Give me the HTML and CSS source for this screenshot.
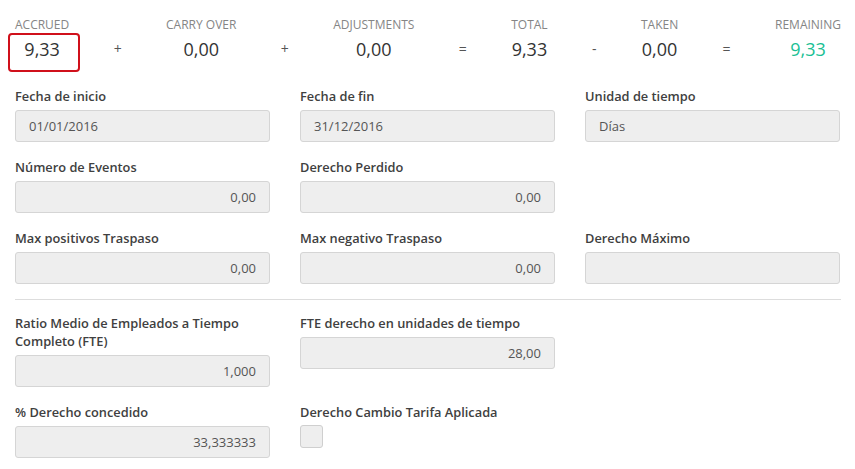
FILE: index.html
```html
<!DOCTYPE html>
<html lang="es">
<head>
<meta charset="utf-8">
<title>Derecho</title>
<link rel="stylesheet" href="styles.css">
</head>
<body>
<div class="page">
  <div class="summary">
    <div class="sum-item">
      <div class="sum-label">ACCRUED</div>
      <div class="sum-value highlighted">9,33</div>
    </div>
    <div class="sum-op">+</div>
    <div class="sum-item">
      <div class="sum-label">CARRY OVER</div>
      <div class="sum-value">0,00</div>
    </div>
    <div class="sum-op">+</div>
    <div class="sum-item">
      <div class="sum-label">ADJUSTMENTS</div>
      <div class="sum-value">0,00</div>
    </div>
    <div class="sum-op">=</div>
    <div class="sum-item">
      <div class="sum-label">TOTAL</div>
      <div class="sum-value">9,33</div>
    </div>
    <div class="sum-op">-</div>
    <div class="sum-item">
      <div class="sum-label">TAKEN</div>
      <div class="sum-value">0,00</div>
    </div>
    <div class="sum-op">=</div>
    <div class="sum-item">
      <div class="sum-label">REMAINING</div>
      <div class="sum-value positive">9,33</div>
    </div>
  </div>

  <div class="form-grid">
    <div class="field">
      <label class="field-label">Fecha de inicio</label>
      <div class="input">01/01/2016</div>
    </div>
    <div class="field">
      <label class="field-label">Fecha de fin</label>
      <div class="input">31/12/2016</div>
    </div>
    <div class="field">
      <label class="field-label">Unidad de tiempo</label>
      <div class="input">Días</div>
    </div>

    <div class="field">
      <label class="field-label">Número de Eventos</label>
      <div class="input num">0,00</div>
    </div>
    <div class="field">
      <label class="field-label">Derecho Perdido</label>
      <div class="input num">0,00</div>
    </div>
    <div class="field"></div>

    <div class="field">
      <label class="field-label">Max positivos Traspaso</label>
      <div class="input num">0,00</div>
    </div>
    <div class="field">
      <label class="field-label">Max negativo Traspaso</label>
      <div class="input num">0,00</div>
    </div>
    <div class="field">
      <label class="field-label">Derecho Máximo</label>
      <div class="input num"></div>
    </div>
  </div>

  <hr class="divider">

  <div class="form-grid">
    <div class="field">
      <label class="field-label">Ratio Medio de Empleados a Tiempo Completo (FTE)</label>
      <div class="input num">1,000</div>
    </div>
    <div class="field">
      <label class="field-label">FTE derecho en unidades de tiempo</label>
      <div class="input num">28,00</div>
    </div>
    <div class="field"></div>

    <div class="field">
      <label class="field-label">% Derecho concedido</label>
      <div class="input num">33,333333</div>
    </div>
    <div class="field">
      <label class="field-label">Derecho Cambio Tarifa Aplicada</label>
      <div class="checkbox"></div>
    </div>
  </div>
</div>
</body>
</html>
```

FILE: styles.css
```css
* {
  box-sizing: border-box;
}

html, body {
  margin: 0;
  padding: 0;
  background: #ffffff;
}

body {
  font-family: "Open Sans", "Liberation Sans", sans-serif;
  color: #333333;
}

.page {
  padding: 17px 14px 0 15px;
}

.summary {
  display: flex;
  justify-content: space-between;
  align-items: flex-start;
}

.sum-item {
  display: flex;
  flex-direction: column;
  align-items: center;
}

.sum-label {
  font-size: 12px;
  line-height: 16px;
  color: #858585;
  white-space: nowrap;
}

.sum-value {
  margin-top: 4px;
  font-size: 18px;
  line-height: 24px;
  color: #333333;
  position: relative;
}

.sum-value.highlighted::after {
  content: "";
  position: absolute;
  top: -4px;
  bottom: -11px;
  left: -16px;
  right: -20px;
  border: 2px solid #d0101b;
  border-radius: 4px;
}

.sum-value.positive {
  color: #1abf94;
}

.sum-op {
  margin-top: 20px;
  font-size: 14px;
  line-height: 24px;
  color: #555555;
}

.form-grid {
  display: grid;
  grid-template-columns: repeat(3, 255px);
  column-gap: 30px;
  row-gap: 16px;
  align-items: start;
}

.summary + .form-grid {
  margin-top: 26px;
}

.field {
  display: flex;
  flex-direction: column;
}

.field-label {
  font-size: 12.8px;
  line-height: 18px;
  font-weight: 600;
  color: #404040;
}

.input {
  margin-top: 5px;
  height: 32px;
  padding: 0 13px;
  display: flex;
  align-items: center;
  background: #eeeeee;
  border: 1px solid #d5d5d5;
  border-radius: 3px;
  font-size: 13px;
  color: #555555;
}

.input.num {
  justify-content: flex-end;
}

.checkbox {
  margin-top: 4px;
  width: 23px;
  height: 23px;
  background: #eeeeee;
  border: 1px solid #cfcfcf;
  border-radius: 3px;
}

.divider {
  margin: 15px 0 14px 0;
  border: 0;
  border-top: 1px solid #dddddd;
  height: 0;
}
```
